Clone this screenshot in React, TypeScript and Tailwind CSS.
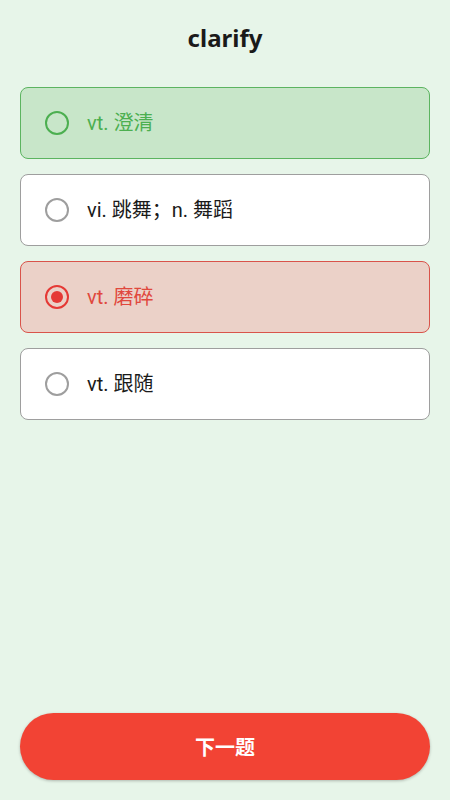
import React from "react";

type OptionState = "correct" | "wrong" | "idle";

const options: { label: string; state: OptionState }[] = [
  { label: "vt. 澄清", state: "correct" },
  { label: "vi. 跳舞；n. 舞蹈", state: "idle" },
  { label: "vt. 磨碎", state: "wrong" },
  { label: "vt. 跟随", state: "idle" },
];

const styles = {
  correct: {
    card: "bg-[#c8e6c9] border-[#5cb460]",
    text: "text-[#4caf50]",
    ring: "border-[#4caf50]",
  },
  wrong: {
    card: "bg-[#ebd1c8] border-[#d9534a]",
    text: "text-[#e0483d]",
    ring: "border-[#e53935]",
  },
  idle: {
    card: "bg-white border-[#9e9e9e]",
    text: "text-[#1a1a1a]",
    ring: "border-[#9e9e9e]",
  },
};

function Radio({ state, checked }: { state: OptionState; checked: boolean }) {
  return (
    <span
      className={`w-[24px] h-[24px] rounded-full border-[2.5px] flex items-center justify-center shrink-0 ${styles[state].ring}`}
    >
      {checked && <span className="w-[12px] h-[12px] rounded-full bg-[#e53935]" />}
    </span>
  );
}

export default function App() {
  return (
    <div className="h-[800px] w-full bg-[#e7f5e9] flex flex-col px-5 pb-5 font-['Roboto','Noto_Sans_CJK_SC',sans-serif]">
      <h1 className="pt-[21px] text-center text-[24px] leading-[34px] font-bold text-[#1a1a1a] font-['Noto_Sans',sans-serif]">clarify</h1>

      <div className="mt-[32px] flex flex-col gap-[15px]">
        {options.map((o) => (
          <div
            key={o.label}
            className={`h-[72px] rounded-lg border flex items-center pl-[24px] gap-[18px] ${styles[o.state].card}`}
          >
            <Radio state={o.state} checked={o.state === "wrong"} />
            <span className={`text-[20px] ${styles[o.state].text}`}>{o.label}</span>
          </div>
        ))}
      </div>

      <button className="mt-auto h-[67px] w-full rounded-full bg-[#f24334] text-white text-[20px] font-bold shadow-[0_1px_3px_rgba(0,0,0,0.25)] font-['Noto_Sans_CJK_SC',sans-serif]">
        下一题
      </button>
    </div>
  );
}
